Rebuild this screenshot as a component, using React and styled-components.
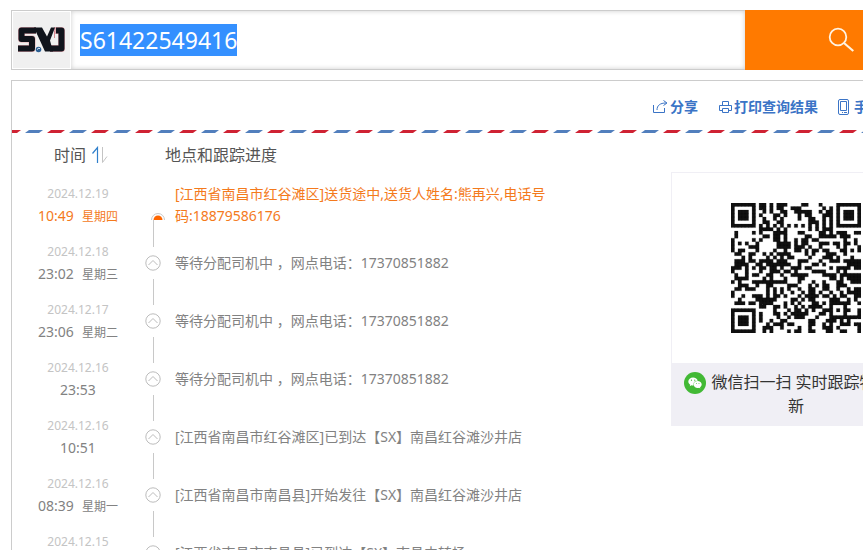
import React, { useEffect, useRef, useState } from "react";
import styled, { createGlobalStyle } from "styled-components";
import { FaWeixin } from "react-icons/fa";

const trackData = [
  {
    date: "2024.12.19",
    time: "10:49",
    week: "星期四",
    text: "[江西省南昌市红谷滩区]送货途中,送货人姓名:熊再兴,电话号码:18879586176",
  },
  { date: "2024.12.18", time: "23:02", week: "星期三", text: "等待分配司机中 ，网点电话：17370851882" },
  { date: "2024.12.17", time: "23:06", week: "星期二", text: "等待分配司机中 ，网点电话：17370851882" },
  { date: "2024.12.16", time: "23:53", text: "等待分配司机中 ，网点电话：17370851882" },
  { date: "2024.12.16", time: "10:51", text: "[江西省南昌市红谷滩区]已到达【SX】南昌红谷滩沙井店" },
  { date: "2024.12.16", time: "08:39", week: "星期一", text: "[江西省南昌市南昌县]开始发往【SX】南昌红谷滩沙井店" },
  { date: "2024.12.15", time: "22:17", week: "星期日", text: "[江西省南昌市南昌县]已到达【SX】南昌中转场" },
];

const QR_SIZE = 37;

// finder squares, timing lines and the alignment square are fixed, the rest is filled in
const isDark = (x, y) => {
  const finders = [[0, 0], [QR_SIZE - 7, 0], [0, QR_SIZE - 7]];
  for (const [fx, fy] of finders) {
    const d = Math.max(Math.abs(x - fx - 3), Math.abs(y - fy - 3));
    if (d <= 4) return d !== 2 && d !== 4;
  }
  const a = Math.max(Math.abs(x - 30), Math.abs(y - 30));
  if (a <= 2) return a !== 1;
  if (x === 6) return y % 2 === 0;
  if (y === 6) return x % 2 === 0;
  let h = Math.imul(x + 11, 374761393) ^ Math.imul(y + 5, 668265263);
  h = Math.imul(h ^ (h >>> 13), 1274126177);
  return ((h ^ (h >>> 16)) & 1) === 1;
};

let qrPath = "";
for (let y = 0; y < QR_SIZE; y++) {
  for (let x = 0; x < QR_SIZE; x++) {
    if (isDark(x, y)) qrPath += `M${x} ${y}h1v1h-1z`;
  }
}

const Logo = () => (
  <svg width="50" height="28" viewBox="0 0 50 28" fill="none" aria-hidden="true">
    <g stroke="#e3a9b0" strokeWidth="7" strokeLinejoin="round">
      <path d="M19 4.500H4.500V13H15V22.500H1" />
      <path d="M37 4.500H44.500V22.500H33" />
    </g>
    <g stroke="#10141c" strokeWidth="6" strokeLinejoin="round">
      <path d="M19 4.500H4.500V13H15V22.500H1" />
      <path d="M39 4.500H44.500V22.500H33" />
    </g>
    <path d="M17 1.500h8l5 9 4-9h4l-5 13 3 11h-8z" fill="#10141c" />
    <path d="M37.500 5v7" stroke="#d98b94" />
    <circle cx="21.500" cy="23.500" r="3.500" fill="#f0f0f0" />
    <circle cx="21.500" cy="23.500" r="2.800" fill="#2d5f93" />
    <path d="M20 23.500l2-1.500 1 1" stroke="#dbe8f2" />
  </svg>
);

const SearchIcon = () => (
  <svg width="26" height="26" viewBox="0 0 26 26" fill="none" stroke="#fff3e2" aria-hidden="true">
    <circle cx="10" cy="10" r="8.300" strokeWidth="1.800" />
    <path d="M16 16l9.300 8" strokeWidth="2.200" />
  </svg>
);

const ShareIcon = () => (
  <svg width="16" height="16" viewBox="0 0 16 16" fill="none" stroke="currentColor" aria-hidden="true">
    <path d="M1.500 6v7.500h11V9" />
    <path d="M5 11c0-4.500 3-7 9-7" />
    <path d="M11.500 1.500l3.500 2.500-3.500 2.500" />
  </svg>
);

const PrintIcon = () => (
  <svg width="16" height="16" viewBox="0 0 16 16" fill="none" stroke="currentColor" aria-hidden="true">
    <path d="M6.500 6.500v-4h6v4" />
    <path d="M6 11.500H3.500v-5h12v5H13" />
    <path d="M6.500 9.500h6v4h-6z" />
  </svg>
);

const PhoneIcon = () => (
  <svg width="16" height="16" viewBox="0 0 16 16" fill="none" stroke="currentColor" aria-hidden="true">
    <rect x="2.500" y=".5" width="10" height="15" rx="1.500" />
    <path d="M4.500 2.500h6v9h-6zM6 13.500h1M8 13.500h3" />
  </svg>
);

const SortIcon = () => (
  <svg width="16" height="18" viewBox="0 0 16 18" fill="none" aria-hidden="true">
    <path d="M.5 7.500l5-6V17" stroke="#2f7fcb" strokeWidth="1.200" />
    <path d="M10.500 1v15.500l4.500-6" stroke="#c4c4c4" />
  </svg>
);

const NodeIcon = () => (
  <svg width="16" height="16" viewBox="0 0 16 16" fill="none" stroke="#bcbcbc" aria-hidden="true">
    <circle cx="8" cy="8" r="7.200" />
    <path d="M3.500 10L8 5.500l4.500 4.500" />
  </svg>
);

const CurrentIcon = () => (
  <svg width="22" height="7" viewBox="-2 0 22 7" fill="none" overflow="visible" aria-hidden="true">
    <path d="M7.500 7a6.500 6.500 0 0 1 13 0" stroke="#c8c8c8" />
    <path d="M9.500 7a4.500 4.500 0 0 1 9 0z" fill="#f60" />
  </svg>
);

const App = () => {
  const inputRef = useRef(null);
  const [number, setNumber] = useState("S61422549416");
  const [newestFirst, setNewestFirst] = useState(true);
  const rows = newestFirst ? trackData : [...trackData].reverse();

  useEffect(() => {
    inputRef.current.focus();
    inputRef.current.select();
  }, []);

  return (
    <>
      <GlobalStyle />
      <Page>
        <Container>
          <SearchBar onSubmit={(e) => e.preventDefault()}>
            <SearchField>
              <LogoBox>
                <Logo />
              </LogoBox>
              <SearchInput
                ref={inputRef}
                aria-label="快递单号"
                value={number}
                onChange={(e) => setNumber(e.target.value)}
              />
            </SearchField>
            <SearchButton type="submit" aria-label="查询">
              <SearchIcon />
            </SearchButton>
          </SearchBar>

          <Panel>
            <Toolbar>
              <ToolLink href="#share">
                <ShareIcon />
                分享
              </ToolLink>
              <ToolLink href="#print">
                <PrintIcon />
                打印查询结果
              </ToolLink>
              <ToolLink href="#phone">
                <PhoneIcon />
                手机查询
              </ToolLink>
            </Toolbar>
            <Stripe />
            <Content>
              <TrackList>
                <TrackTable>
                  <colgroup>
                    <TimeCol />
                    <NodeCol />
                    <col />
                  </colgroup>
                  <thead>
                    <tr>
                      <TimeHead>
                        <SortButton type="button" onClick={() => setNewestFirst(!newestFirst)}>
                          时间
                          <SortIcon />
                        </SortButton>
                      </TimeHead>
                      <PlaceHead colSpan={2}>地点和跟踪进度</PlaceHead>
                    </tr>
                  </thead>
                  <tbody>
                    {rows.map((item) => {
                      const current = item === trackData[0];
                      return (
                        <TrackRow key={item.date + item.time} $current={current}>
                          <TimeCell>
                            <DateText>{item.date}</DateText>
                            <TimeText>
                              {item.time}
                              {item.week && <Week>{item.week}</Week>}
                            </TimeText>
                          </TimeCell>
                          <NodeCell>
                            <Node $current={current}>
                              {current ? <CurrentIcon /> : <NodeIcon />}
                            </Node>
                          </NodeCell>
                          <TextCell>{item.text}</TextCell>
                        </TrackRow>
                      );
                    })}
                  </tbody>
                </TrackTable>
              </TrackList>

              <QrCard>
                <QrBox>
                  <svg
                    width="130"
                    height="130"
                    viewBox={`0 0 ${QR_SIZE} ${QR_SIZE}`}
                    role="img"
                    aria-label="微信二维码"
                  >
                    <path d={qrPath} fill="#111" stroke="#111" strokeWidth=".06" />
                  </svg>
                </QrBox>
                <QrCaption>
                  <WechatBadge>
                    <FaWeixin size={14} />
                  </WechatBadge>
                  微信扫一扫 实时跟踪物流更新
                </QrCaption>
              </QrCard>
            </Content>
          </Panel>
        </Container>
      </Page>
    </>
  );
};

export default App;

const stripeTile = `<svg xmlns='http://www.w3.org/2000/svg' width='44' height='3'><path d='M0 3L4 0H18L14 3z' fill='%23cf2233'/><path d='M22 3L26 0H40L36 3z' fill='%23527fbd'/></svg>`;

const GlobalStyle = createGlobalStyle`
  * {
    box-sizing: border-box;
  }
  body {
    margin: 0;
    background: #fff;
    font-family: "Noto Sans", "Noto Sans CJK SC", sans-serif;
    font-size: 14px;
    line-height: 22px;
    color: #828282;
  }
  svg {
    flex-shrink: 0;
  }
`;

const Page = styled.div`
  height: 100vh;
  overflow: hidden;
  padding: 10px 11px;
`;

const Container = styled.div`
  min-width: 926px;
  max-width: 1200px;
  margin: 0 auto;
`;

const SearchBar = styled.form`
  display: flex;
  height: 60px;
  margin-bottom: 10px;
`;

const SearchField = styled.div`
  flex: 1;
  display: flex;
  border: 1px solid #ccc;
  border-right: 0;
`;

const LogoBox = styled.div`
  display: flex;
  align-items: center;
  justify-content: center;
  width: 59px;
  border: 1px solid #fff;
  background: #f0f0f0;
`;

const SearchInput = styled.input`
  flex: 1;
  min-width: 0;
  padding: 0 9px;
  border: 0;
  outline: 0;
  background: #fff;
  box-shadow: inset 0 0 5px rgba(0, 0, 0, 0.2);
  font-family: inherit;
  font-size: 23px;
  color: #333;
  &::selection {
    background: rgba(51, 144, 255, 0.996);
    color: #fff;
  }
`;

const SearchButton = styled.button`
  display: flex;
  align-items: center;
  justify-content: center;
  width: 192px;
  padding: 0;
  border: 0;
  background: #ff7a00;
  cursor: pointer;
`;

const Panel = styled.div`
  border: 1px solid #ccc;
`;

const Toolbar = styled.div`
  display: flex;
  justify-content: flex-end;
  column-gap: 18px;
  padding: 15px 26px 12px;
`;

const ToolLink = styled.a`
  display: flex;
  align-items: center;
  column-gap: 2px;
  font-weight: bold;
  color: #3b74c6;
  text-decoration: none;
`;

const Stripe = styled.div`
  height: 3px;
  background: url("data:image/svg+xml,${stripeTile}") -9px 0 repeat-x;
`;

const Content = styled.div`
  display: flex;
  align-items: flex-start;
  padding-right: 15px;
`;

const TrackList = styled.div`
  flex: 1;
  min-width: 0;
`;

const TrackTable = styled.table`
  width: 100%;
  table-layout: fixed;
  border-collapse: collapse;
`;

const TimeCol = styled.col`
  width: 132px;
`;

const NodeCol = styled.col`
  width: 18px;
`;

const HeadCell = styled.th`
  height: 43px;
  font-size: 16px;
  font-weight: normal;
  color: #555;
`;

const TimeHead = styled(HeadCell)`
  padding: 0 0 0 6px;
`;

const PlaceHead = styled(HeadCell)`
  padding: 0 0 0 21px;
  text-align: left;
`;

const SortButton = styled.button`
  display: inline-flex;
  align-items: center;
  column-gap: 6px;
  padding: 0;
  border: 0;
  background: none;
  font: inherit;
  color: inherit;
  cursor: pointer;
`;

const TrackRow = styled.tr`
  height: 58px;
  color: ${({ $current }) => ($current ? "#f47a1c" : "#828282")};
`;

const TimeCell = styled.td`
  padding: 0;
  text-align: center;
`;

const DateText = styled.div`
  font-size: 12px;
  color: #c4c4c4;
`;

const TimeText = styled.div`
  font-size: 14px;
`;

const Week = styled.span`
  margin-left: 8px;
  font-size: 12px;
`;

const NodeCell = styled.td`
  padding: 0;
`;

const Node = styled.div`
  display: flex;
  flex-direction: column;
  align-items: center;
  height: 58px;
  row-gap: ${({ $current }) => ($current ? "0" : "8px")};
  padding-top: ${({ $current }) => ($current ? "37px" : "0")};
  &::before,
  &::after {
    content: "";
    flex: 1;
    width: 1px;
    background: #c8c8c8;
  }
  &::before {
    display: ${({ $current }) => ($current ? "none" : "block")};
  }
`;

const TextCell = styled.td`
  padding: 0 115px 0 13px;
`;

const QrCard = styled.div`
  width: 250px;
  margin-top: 39px;
  border: 1px solid #f0eff5;
`;

const QrBox = styled.div`
  display: flex;
  justify-content: center;
  padding: 30px 0;
`;

const QrCaption = styled.div`
  padding: 7px 10px;
  background: #f0eff5;
  font-size: 16px;
  line-height: 24px;
  text-align: center;
  color: #333;
`;

const WechatBadge = styled.span`
  display: inline-flex;
  align-items: center;
  justify-content: center;
  width: 22px;
  height: 22px;
  margin: 2px 5px 0 0;
  border-radius: 50%;
  background: #42b935;
  color: #fff;
  vertical-align: top;
`;
